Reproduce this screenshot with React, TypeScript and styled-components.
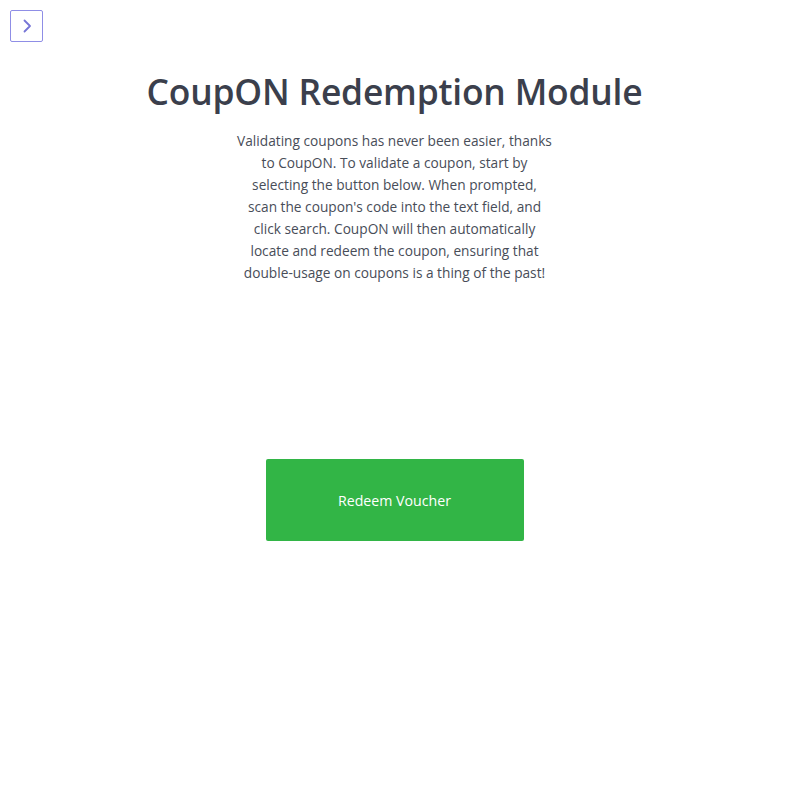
import React from "react";
import styled, { createGlobalStyle } from "styled-components";

const Global = createGlobalStyle`
  html, body { margin: 0; padding: 0; background: #ffffff; }
  body { font-family: "Open Sans", "Noto Sans", sans-serif; }
`;

const Page = styled.div`
  position: relative;
  width: 787px;
  min-height: 787px;
  box-sizing: border-box;
  padding-top: 10px;
`;

const ToggleButton = styled.button`
  position: absolute;
  top: 10px;
  left: 10px;
  width: 33px;
  height: 32px;
  box-sizing: border-box;
  border: 1.5px solid #8f8ee6;
  border-radius: 2px;
  background: #fff;
  display: flex;
  align-items: center;
  justify-content: center;
  padding: 0;
  cursor: pointer;
`;

const Main = styled.main`
  display: flex;
  flex-direction: column;
  align-items: center;
  padding-top: 58px;
  padding-left: 2px;
`;

const Title = styled.h1`
  margin: 0;
  font-family: "Open Sans", sans-serif;
  font-weight: 600;
  font-size: 35.4px;
  line-height: 46px;
  color: #3b3f4c;
  letter-spacing: -0.2px;
`;

const Intro = styled.p`
  margin: 16px 0 0;
  width: 340px;
  text-align: center;
  font-size: 13.7px;
  line-height: 22px;
  color: #484d58;
`;

const RedeemButton = styled.button`
  margin-top: 175px;
  width: 258px;
  height: 82px;
  border: none;
  border-radius: 2px;
  background: #32b546;
  color: #ffffff;
  font-family: "Open Sans", sans-serif;
  font-size: 14.2px;
  cursor: pointer;
`;

const lines = [
  "Validating coupons has never been easier, thanks",
  "to CoupON. To validate a coupon, start by",
  "selecting the button below. When prompted,",
  "scan the coupon's code into the text field, and",
  "click search. CoupON will then automatically",
  "locate and redeem the coupon, ensuring that",
  "double-usage on coupons is a thing of the past!",
];

export default function App() {
  return (
    <>
      <Global />
      <Page>
        <ToggleButton aria-label="Open menu">
          <svg width="16" height="16" viewBox="0 0 16 16" fill="none">
            <path d="M5.5 2.5 L11 8 L5.5 13.5" stroke="#7675d6" strokeWidth="1.8" strokeLinecap="round" strokeLinejoin="round" />
          </svg>
        </ToggleButton>
        <Main>
          <Title>CoupON Redemption Module</Title>
          <Intro>
            {lines.map((l, i) => (
              <React.Fragment key={i}>
                {l}
                {i < lines.length - 1 && <br />}
              </React.Fragment>
            ))}
          </Intro>
          <RedeemButton>Redeem Voucher</RedeemButton>
        </Main>
      </Page>
    </>
  );
}
